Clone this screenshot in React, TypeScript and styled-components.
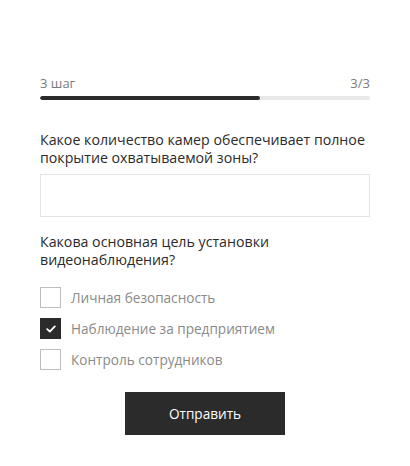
import React, { useState } from 'react';
import styled, { createGlobalStyle } from 'styled-components';

const dark = '#2b2b2b';
const grey = '#8a8a8a';
const line = '#e3e3e3';

const options = [
  'Личная безопасность',
  'Наблюдение за предприятием',
  'Контроль сотрудников',
];

const App: React.FunctionComponent = () => {
  const [checked, setChecked] = useState<number[]>([1]);
  const [cameras, setCameras] = useState('');

  const toggle = (i: number) =>
    setChecked(checked.includes(i) ? checked.filter((c) => c !== i) : [...checked, i]);

  return (
    <>
      <GlobalStyle />
      <Container>
        <StepRow>
          <span>3 шаг</span>
          <span>3/3</span>
        </StepRow>
        <Track>
          <Fill style={{ width: `${(2 / 3) * 100}%` }} />
        </Track>

        <Question $gap={31}>
          Какое количество камер обеспечивает полное покрытие охватываемой зоны?
        </Question>
        <Input value={cameras} onChange={(e) => setCameras(e.target.value)} />

        <Question $gap={16}>Какова основная цель установки видеонаблюдения?</Question>
        <Options>
          {options.map((label, i) => (
            <Option key={label} onClick={() => toggle(i)}>
              <Box $checked={checked.includes(i)}>
                {checked.includes(i) && (
                  <svg width="10" height="8" viewBox="0 0 10 8">
                    <path
                      d="M1.2 4.2 L3.8 6.6 L8.8 1.4"
                      fill="none"
                      stroke="#fff"
                      strokeWidth="1.8"
                      strokeLinecap="round"
                      strokeLinejoin="round"
                    />
                  </svg>
                )}
              </Box>
              {label}
            </Option>
          ))}
        </Options>

        <Submit>Отправить</Submit>
      </Container>
    </>
  );
};

const GlobalStyle = createGlobalStyle`
  body {
    margin: 0;
    background: #fff;
    font-family: 'Open Sans', 'Noto Sans', sans-serif;
  }
`;

const Container = styled.div`
  display: flex;
  flex-direction: column;
  padding: 74px 40px 0;
`;

const StepRow = styled.div`
  display: flex;
  justify-content: space-between;
  font-size: 13px;
  line-height: 18px;
  color: #7a7a7a;
`;

const Track = styled.div`
  margin-top: 4px;
  height: 4px;
  border-radius: 2px;
  background: #e8e8e8;
  overflow: hidden;
`;

const Fill = styled.div`
  height: 100%;
  border-radius: 2px;
  background: ${dark};
`;

const Question = styled.div<{ $gap: number }>`
  margin-top: ${({ $gap }) => $gap}px;
  font-size: 14.2px;
  line-height: 18px;
  color: ${dark};
`;

const Input = styled.input`
  box-sizing: border-box;
  width: 100%;
  height: 43px;
  margin-top: 7px;
  border: 1px solid ${line};
  outline: none;
  padding: 0 12px;
  font: inherit;
  font-size: 14px;
`;

const Options = styled.div`
  display: flex;
  flex-direction: column;
  gap: 10px;
  margin-top: 18px;
`;

const Option = styled.label`
  display: flex;
  align-items: center;
  gap: 10px;
  font-size: 13.6px;
  line-height: 21px;
  color: ${grey};
  cursor: pointer;
`;

const Box = styled.span<{ $checked: boolean }>`
  box-sizing: border-box;
  width: 21px;
  height: 21px;
  display: flex;
  align-items: center;
  justify-content: center;
  border: 1px solid ${({ $checked }) => ($checked ? dark : '#bdbdbd')};
  background: ${({ $checked }) => ($checked ? dark : '#fff')};
`;

const Submit = styled.button`
  align-self: center;
  margin-top: 22px;
  width: 160px;
  height: 43px;
  border: none;
  background: ${dark};
  color: #fff;
  font: inherit;
  font-size: 13.6px;
  cursor: pointer;
`;

export default App;
